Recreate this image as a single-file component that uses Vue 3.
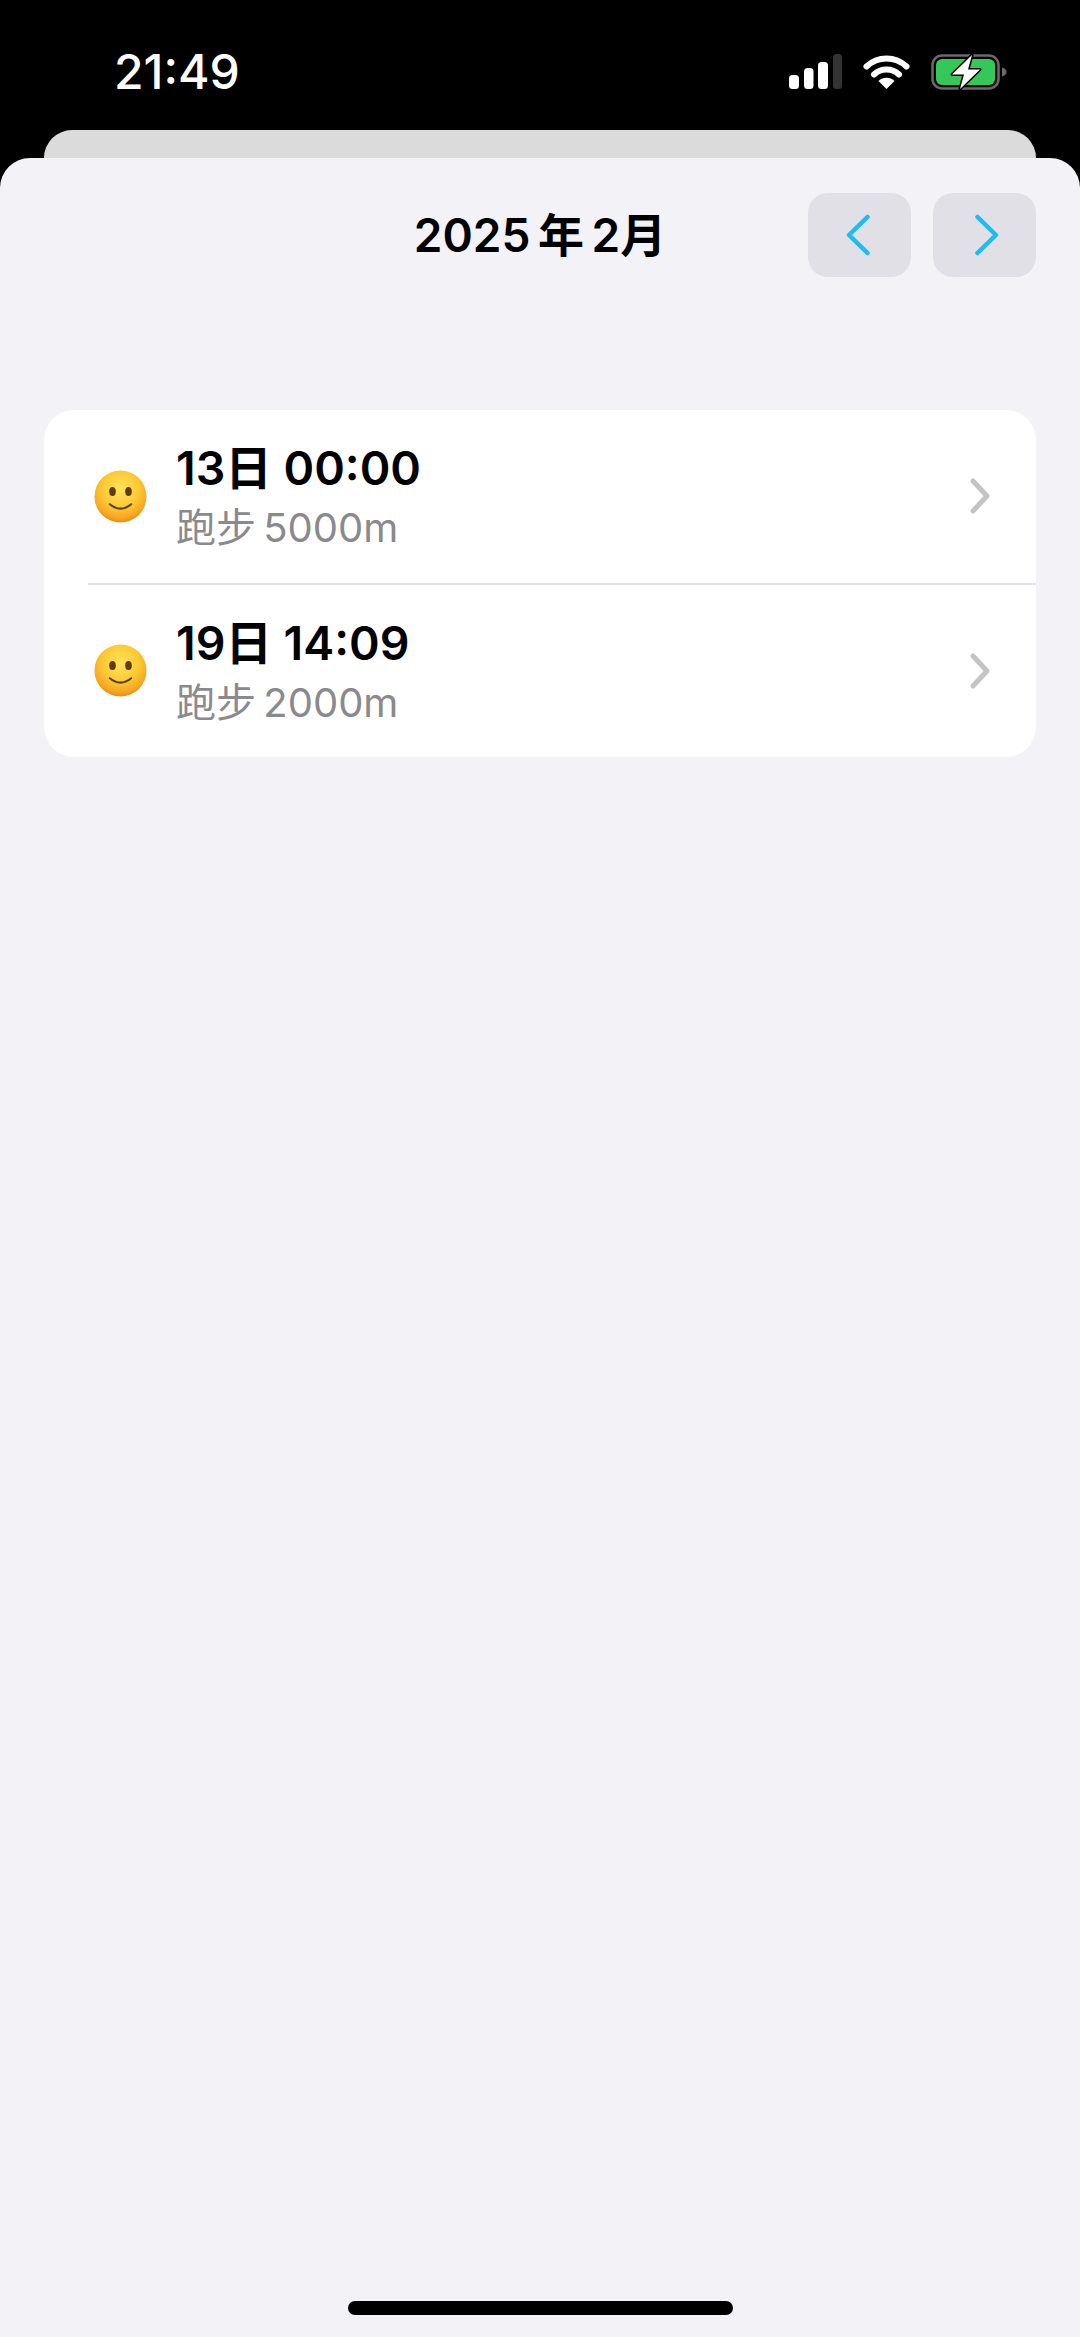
<template>
  <div class="page">
    <div class="status-bar">
      <span class="time">21:49</span>
      <div class="status-icons">
        <svg class="signal" width="53" height="35" viewBox="0 0 53 35">
          <rect x="0" y="21" width="10" height="14" rx="3.5" fill="#fff" />
          <rect x="15" y="14" width="9.500" height="21" rx="3.500" fill="#fff" />
          <rect x="29" y="8" width="10" height="27" rx="3.500" fill="#fff" />
          <rect x="44" y="0" width="9" height="35" rx="3.500" fill="#333" />
        </svg>
        <svg class="wifi" width="47" height="35" viewBox="0 0 47 35">
          <path d="M3.500 12.500A29 29 0 0 1 43.500 12.500" fill="none" stroke="#fff" stroke-width="6" stroke-linecap="round" />
          <path d="M11 20.500A18 18 0 0 1 36 20.500" fill="none" stroke="#fff" stroke-width="6" stroke-linecap="round" />
          <path d="M15.500 27A11.500 11.500 0 0 1 31.500 27L23.500 35Z" fill="#fff" />
        </svg>
        <svg class="battery" width="76" height="38" viewBox="0 0 76 38">
          <rect x="1.500" y="2.500" width="66" height="33" rx="9.500" fill="none" stroke="#6a6a6a" stroke-width="2.500" />
          <rect x="5" y="6" width="59" height="26" rx="6" fill="#34c759" />
          <path d="M71 14.500c3 .8 4.500 2.500 4.500 4.500s-1.500 3.700-4.500 4.500Z" fill="#6a6a6a" />
          <path d="M41 2 21 21.500H33L29 36 49 16.500H37Z" fill="#fff" stroke="#000" stroke-width="3" stroke-linejoin="round" paint-order="stroke" />
        </svg>
      </div>
    </div>

    <div class="back-sheet"></div>

    <div class="sheet">
      <div class="header">
        <span></span>
        <h1 class="title">2025&#8201;年&#8201;2月</h1>
        <div class="nav-buttons">
          <button class="nav-btn" type="button" @click="move(-1)">
            <svg width="30" height="42" viewBox="0 0 30 42">
              <path d="M22.500 3 4 21 22.500 39" fill="none" stroke="#1dbcf2" stroke-width="4.500" stroke-linecap="round" stroke-linejoin="round" />
            </svg>
          </button>
          <button class="nav-btn" type="button" @click="move(1)">
            <svg width="30" height="42" viewBox="0 0 30 42">
              <path d="M7.500 3 26 21 7.500 39" fill="none" stroke="#1dbcf2" stroke-width="4.500" stroke-linecap="round" stroke-linejoin="round" />
            </svg>
          </button>
        </div>
      </div>

      <div class="card">
        <template v-for="(item, index) in records" :key="item.date">
          <div v-if="index > 0" class="divider"></div>
          <div class="row">
            <svg class="emoji" width="53" height="53" viewBox="0 0 53 53">
              <defs>
                <radialGradient :id="'face' + index" cx="50%" cy="36%" r="64%">
                  <stop offset="0%" stop-color="#ffe45a" />
                  <stop offset="55%" stop-color="#fdc935" />
                  <stop offset="85%" stop-color="#f6a823" />
                  <stop offset="100%" stop-color="#ea8c17" />
                </radialGradient>
              </defs>
              <circle cx="26.500" cy="26.500" r="26" :fill="'url(#face' + index + ')'" />
              <ellipse cx="18.500" cy="21.500" rx="3.300" ry="4.500" fill="#5f3c0c" />
              <ellipse cx="34.500" cy="21.500" rx="3.300" ry="4.500" fill="#5f3c0c" />
              <path d="M15.800 34.200Q26.500 43 37.200 34.200" fill="none" stroke="#5f3c0c" stroke-width="2" stroke-linecap="round" />
            </svg>
            <div class="row-text">
              <div class="row-title">{{ item.date }}</div>
              <div class="row-sub">{{ item.detail }}</div>
            </div>
            <svg class="row-arrow" width="24" height="38" viewBox="0 0 24 38">
              <path d="M5 4 19 19 5 34" fill="none" stroke="#c4c4c7" stroke-width="5" stroke-linecap="round" stroke-linejoin="round" />
            </svg>
          </div>
        </template>
      </div>

      <div class="home-bar"></div>
    </div>
  </div>
</template>

<script setup>
import { ref } from 'vue';

const records = [
  { date: '13日 00:00', detail: '跑步\u20095000m' },
  { date: '19日 14:09', detail: '跑步\u20092000m' }
];

const offset = ref(0);

const move = (step) => {
  offset.value += step;
};
</script>

<style scoped>
.page {
  display: flex;
  flex-direction: column;
  height: 2337px;
  background-color: #000;
  font-family: Inter, "Noto Sans CJK SC", sans-serif;
  overflow: hidden;
}

.status-bar {
  display: flex;
  justify-content: space-between;
  align-items: flex-start;
  height: 130px;
  box-sizing: border-box;
  padding: 48px 73px 0 114px;
}

.time {
  color: #fff;
  font-size: 48px;
  font-weight: 500;
  line-height: 48px;
}

.status-icons {
  display: flex;
  align-items: flex-start;
  gap: 21px;
  padding-top: 6px;
}

.battery {
  margin-top: -1px;
}

.back-sheet {
  height: 28px;
  margin: 0 44px;
  background-color: #dbdbdb;
  border-radius: 30px 30px 0 0;
}

.sheet {
  flex: 1;
  display: flex;
  flex-direction: column;
  background-color: #f2f2f7;
  border-radius: 30px 30px 0 0;
}

.header {
  display: grid;
  grid-template-columns: 1fr auto 1fr;
  align-items: center;
  padding: 35px 44px 0;
}

.title {
  margin: 0;
  color: #000;
  font-size: 46px;
  font-weight: 600;
  line-height: 84px;
}

.nav-buttons {
  display: flex;
  justify-content: flex-end;
  gap: 22px;
}

.nav-btn {
  display: flex;
  align-items: center;
  justify-content: center;
  width: 103px;
  height: 84px;
  padding: 0;
  border: none;
  border-radius: 20px;
  background-color: #e0e0e6;
}

.card {
  margin: 133px 44px 0;
  background-color: #fff;
  border-radius: 30px;
}

.row {
  display: flex;
  align-items: center;
  height: 172.5px;
  padding: 0 44px 0 50px;
}

.divider {
  height: 2px;
  margin-left: 44px;
  background-color: #e2e2e4;
}

.emoji {
  flex-shrink: 0;
}

.row-text {
  flex: 1;
  margin-left: 29px;
}

.row-title {
  color: #000;
  font-size: 46.5px;
  font-weight: 600;
  line-height: 58px;
}

.row-sub {
  margin-top: 6px;
  color: #8a8a8e;
  font-size: 40px;
  line-height: 50px;
}

.home-bar {
  width: 385px;
  height: 14px;
  margin: auto auto 22px;
  background-color: #000;
  border-radius: 7px;
}
</style>

<style>
html,
body {
  margin: 0;
  background-color: #000;
}
</style>
